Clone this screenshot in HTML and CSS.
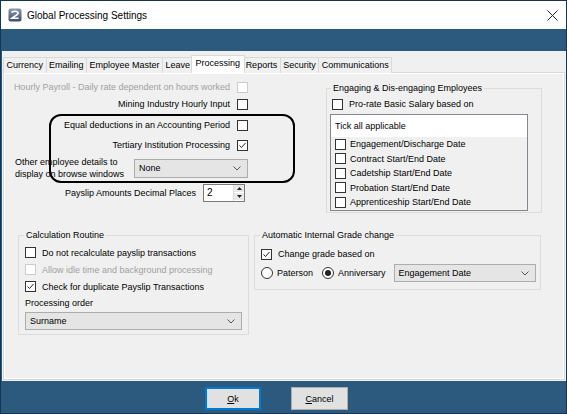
FILE: index.html
```html
<!DOCTYPE html>
<html>
<head>
<meta charset="utf-8">
<link rel="stylesheet" href="styles.css">
</head>
<body>
<div class="window">
  <div class="titlebar">
    <svg class="app-icon" viewBox="0 0 14 14"><defs><linearGradient id="ig" x1="0" y1="0" x2="0" y2="1"><stop offset="0" stop-color="#8a9bb0"/><stop offset="1" stop-color="#3d4f63"/></linearGradient></defs><rect x="0.5" y="0.5" width="13" height="13" rx="2" fill="url(#ig)"/><path d="M3.5 4.5 Q7 2 10 4.5 Q10.5 6.5 7 8 L4 10.2 L10.5 10.2" stroke="#fff" stroke-width="1.6" fill="none"/></svg>
    <span class="title">Global Processing Settings</span>
    <svg class="close" viewBox="0 0 11 11"><path d="M0.5 0.5 L10.5 10.5 M10.5 0.5 L0.5 10.5" stroke="#222" stroke-width="1"/></svg>
  </div>
  <div class="band"></div>
  <div class="client">
    <div class="tabs">
      <div class="tab">Currency</div>
      <div class="tab">Emailing</div>
      <div class="tab">Employee Master</div>
      <div class="tab">Leave</div>
      <div class="tab active">Processing</div>
      <div class="tab">Reports</div>
      <div class="tab">Security</div>
      <div class="tab">Communications</div>
    </div>
    <div class="panel">
      <div class="top">
        <div class="leftcol">
          <div class="rrow r1"><span class="disabled">Hourly Payroll - Daily rate dependent on hours worked</span><span class="cb off"></span></div>
          <div class="rrow r2"><span>Mining Industry Hourly Input</span><span class="cb"></span></div>
          <div class="rrow r3"><span>Equal deductions in an Accounting Period</span><span class="cb"></span></div>
          <div class="rrow r4"><span>Tertiary Institution Processing</span><span class="cb"><svg viewBox="0 0 9 9"><path d="M1.5 4.5 L3.5 6.5 L7.5 2" stroke="#222" fill="none" stroke-width="1"/></svg></span></div>
          <div class="other-row">
            <span class="two-line">Other employee details to<br>display on browse windows</span>
            <div class="combo w-none"><span>None</span><svg class="chev" viewBox="0 0 8 5"><path d="M0.5 0.5 L4 4 L7.5 0.5" stroke="#555" fill="none"/></svg></div>
          </div>
          <div class="payslip-row">
            <span>Payslip Amounts Decimal Places</span>
            <div class="spin"><span class="spin-val">2</span><div class="spin-btns"><span class="sb"><svg viewBox="0 0 5 3"><path d="M0 3 L2.5 0 L5 3Z" fill="#222"/></svg></span><span class="sb"><svg viewBox="0 0 5 3"><path d="M0 0 L2.5 3 L5 0Z" fill="#222"/></svg></span></div></div>
          </div>
        </div>
        <fieldset class="group engage">
          <legend>Engaging &amp; Dis-engaging Employees</legend>
          <div class="crow prorate"><span class="cb"></span><span>Pro-rate Basic Salary based on</span></div>
          <div class="listbox">
            <div class="list-head">Tick all applicable</div>
            <div class="litem"><span class="cb"></span><span>Engagement/Discharge Date</span></div>
            <div class="litem"><span class="cb"></span><span>Contract Start/End Date</span></div>
            <div class="litem"><span class="cb"></span><span>Cadetship Start/End Date</span></div>
            <div class="litem"><span class="cb"></span><span>Probation Start/End Date</span></div>
            <div class="litem"><span class="cb"></span><span>Apprenticeship Start/End Date</span></div>
          </div>
        </fieldset>
      </div>
      <div class="bottom">
        <fieldset class="group calc">
          <legend>Calculation Routine</legend>
          <div class="crow c1"><span class="cb"></span><span>Do not recalculate payslip transactions</span></div>
          <div class="crow"><span class="cb off"></span><span class="disabled">Allow idle time and background processing</span></div>
          <div class="crow"><span class="cb"><svg viewBox="0 0 9 9"><path d="M1.5 4.5 L3.5 6.5 L7.5 2" stroke="#222" fill="none" stroke-width="1"/></svg></span><span>Check for duplicate Payslip Transactions</span></div>
          <div class="po-label">Processing order</div>
          <div class="combo w-order"><span>Surname</span><svg class="chev" viewBox="0 0 8 5"><path d="M0.5 0.5 L4 4 L7.5 0.5" stroke="#555" fill="none"/></svg></div>
        </fieldset>
        <fieldset class="group grade">
          <legend>Automatic Internal Grade change</legend>
          <div class="crow g1"><span class="cb"><svg viewBox="0 0 9 9"><path d="M1.5 4.5 L3.5 6.5 L7.5 2" stroke="#222" fill="none" stroke-width="1"/></svg></span><span>Change grade based on</span></div>
          <div class="radio-row">
            <span class="radio"></span><span>Paterson</span>
            <span class="radio on second"></span><span>Anniversary</span>
            <div class="combo w-eng"><span>Engagement Date</span><svg class="chev" viewBox="0 0 8 5"><path d="M0.5 0.5 L4 4 L7.5 0.5" stroke="#555" fill="none"/></svg></div>
          </div>
        </fieldset>
      </div>
      <div class="annot"></div>
    </div>
  </div>
  <div class="footer">
    <button class="btn default"><u>O</u>k</button>
    <button class="btn cancel"><u>C</u>ancel</button>
  </div>
</div>
</body>
</html>
```
FILE: styles.css
```css
* { box-sizing: border-box; }
body { margin: 0; font-family: "Liberation Sans", Arial, sans-serif; font-size: 9px; color: #000; }

.window { width: 567px; height: 414px; border: 1px solid #173552; background: #2b5a7e; display: flex; flex-direction: column; }

.titlebar { height: 28px; flex: none; background: #fff; display: flex; align-items: center; padding-left: 7px; }
.app-icon { width: 14px; height: 14px; }
.title { font-size: 10px; margin-left: 5px; color: #000; }
.close { width: 11px; height: 11px; margin-left: auto; margin-right: 8px; }

.band { height: 22px; flex: none; }

.client { height: 330px; flex: none; margin-left: 1px; background: #f0f0f0; padding: 4px 1px 1px 1px; display: flex; flex-direction: column; }

.tabs { display: flex; align-items: flex-end; height: 18px; position: relative; z-index: 2; }
.tab { height: 16px; line-height: 15px; padding: 0 2.5px; border: 1px solid #d9d9d9; border-bottom: none; background: #f0f0f0; margin-right: -1px; white-space: nowrap; }
.tab.active { height: 18px; line-height: 15px; background: #fff; padding: 0 4px; margin-left: -2px; margin-right: -3px; position: relative; z-index: 3; }

.panel { flex: 1; margin-top: -1px; border: 1px solid #d9d9d9; box-shadow: inset 0 0 0 1px #fff; position: relative; }

.top { display: flex; align-items: flex-start; }
.leftcol { width: 244px; display: flex; flex-direction: column; }
.rrow { display: flex; justify-content: flex-end; align-items: center; height: 16px; gap: 7px; white-space: nowrap; }
.r1 { margin-top: 6px; }
.r2 { margin-top: 1px; }
.r3 { margin-top: 5px; }
.r4 { margin-top: 4px; }
.disabled { color: #a0a0a0; }

.cb { width: 11px; height: 11px; border: 1px solid #333; background: #fff; flex: none; display: inline-flex; align-items: center; justify-content: center; }
.cb svg { width: 9px; height: 9px; }
.cb.off { border-color: #cccccc; }

.other-row { margin-top: 3px; height: 24px; display: flex; align-items: center; justify-content: space-between; padding-left: 11px; }
.two-line { line-height: 12px; }
.combo { display: flex; align-items: center; background: #e5e5e5; border: 1px solid #adadad; padding-left: 4px; white-space: nowrap; }
.chev { width: 8px; height: 5px; margin-left: auto; margin-right: 6px; }
.w-none { width: 114px; height: 19px; }
.w-order { width: 217px; height: 18px; margin-top: 2px; }
.w-eng { width: 142px; height: 18px; margin-left: 4px; flex: none; }

.payslip-row { margin-top: 3px; height: 19px; display: flex; align-items: center; justify-content: flex-end; gap: 7px; padding-right: 3px; }
.spin { width: 42px; height: 18px; border: 1px solid #7a7a7a; background: #fff; display: flex; }
.spin-val { flex: 1; padding-left: 3px; line-height: 16px; font-size: 10px; }
.spin-btns { width: 11px; display: flex; flex-direction: column; border-left: 1px solid #dcdcdc; }
.sb { flex: 1; background: #e9e9e9; display: flex; align-items: center; justify-content: center; border-bottom: 1px solid #fff; }
.sb svg { width: 5px; height: 3px; }

.group { border: 1px solid #dcdcdc; margin: 0; min-width: 0; }
.group legend { padding: 0 2px; margin-left: 1px; line-height: 11px; }

.engage { margin-left: 78px; margin-top: 10px; width: 216px; padding: 0 0 1px 3px; }
.crow { display: flex; align-items: center; gap: 6px; white-space: nowrap; }
.prorate { height: 14px; margin-top: 3px; padding-left: 2px; }
.listbox { margin-top: 3px; width: 198px; height: 97px; border: 1px solid #828790; }
.list-head { height: 22px; background: #fff; padding-left: 4px; line-height: 22px; }
.litem { height: 14.5px; display: flex; align-items: center; gap: 4px; padding-left: 4px; }

.bottom { display: flex; align-items: flex-start; margin-top: 17px; }
.calc { margin-left: 14px; width: 231px; padding: 0 0 4px 6px; }
.calc legend { margin-left: -1px; }
.calc .crow { height: 17px; }
.c1 { margin-top: 3px; }
.po-label { height: 13px; line-height: 13px; margin-top: 2px; }

.grade { margin-left: 5px; width: 287px; padding: 0 0 7px 6px; }
.grade legend { margin-left: -1px; }
.g1 { height: 14px; margin-top: 6px; }
.radio-row { display: flex; align-items: center; margin-top: 3px; gap: 4px; white-space: nowrap; }
.radio { width: 12px; height: 12px; border: 1px solid #333; border-radius: 50%; background: #fff; flex: none; display: inline-flex; align-items: center; justify-content: center; }
.radio.second { margin-left: 5px; }
.radio.on::after { content: ""; width: 6px; height: 6px; border-radius: 50%; background: #222; }

.annot { position: absolute; left: 45px; top: 41px; width: 246px; height: 69px; border: 2px solid #000; border-radius: 12px; pointer-events: none; }

.footer { flex: 1; display: flex; align-items: flex-start; padding-top: 6px; padding-left: 204px; gap: 30px; }
.btn { font-family: "Liberation Sans", Arial, sans-serif; font-size: 9px; color: #000; background: #e1e1e1; height: 23px; padding: 0; border: 1px solid #adadad; }
.btn.default { width: 56px; border: 2px solid #0078d7; }
.btn.cancel { width: 57px; }
```
